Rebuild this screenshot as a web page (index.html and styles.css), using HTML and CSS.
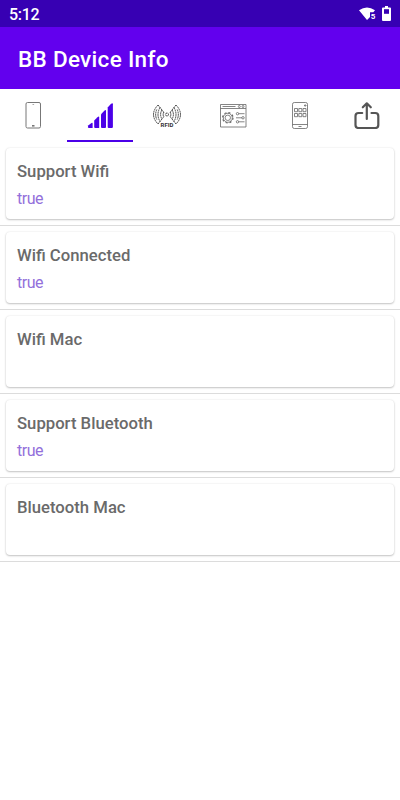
FILE: index.html
```html
<!DOCTYPE html>
<html lang="en">
<head>
    <meta charset="UTF-8">
    <meta name="viewport" content="width=device-width, initial-scale=1.0">
    <title>BB Device Info</title>
    <link rel="stylesheet" href="styles.css">
</head>
<body>
    <div class="status-bar">
        <span class="time">5:12</span>
        <div class="status-icons">
            <svg width="18" height="14" viewBox="0 0 18 14">
                <path d="M0 3.2Q8 -2.4 16 3.2L14.3 5.200H11V10L8 13Z" fill="#fff"/>
                <text x="11.700" y="12.300" class="wifi-label">5</text>
            </svg>
            <svg width="9" height="15" viewBox="0 0 9 15">
                <path d="M3 0h3v1.500h2q1 0 1 1v11.500q0 1-1 1H1q-1 0-1-1V2.500q0-1 1-1h2z" fill="#fff"/>
                <path d="M2 3.200h5v4.600H2z" fill="#3700b3"/>
            </svg>
        </div>
    </div>

    <header class="app-bar">
        <h1>BB Device Info</h1>
    </header>

    <nav class="tabs">
        <div class="tab">
            <svg width="28" height="28" viewBox="0 0 28 28" fill="none" stroke="#777">
                <rect x="7" y="1.500" width="14.500" height="25.500" rx="1.500"/>
                <path d="M13.500 3.500h1.600" stroke="#aaa"/>
                <path d="M13 24.800h2.500" stroke-width="1.600"/>
            </svg>
        </div>
        <div class="tab active">
            <svg width="28" height="28" viewBox="0 0 28 28" fill="#4b00e8">
                <path d="M2.500 24.300L5.500 22Q6.600 21.200 6.600 22.500V27H3Q1 27 2.500 24.300Z"/>
                <path d="M8.200 19.500L11.500 16.200Q13.200 14.800 13.200 16.600V27H9.200Q8.200 27 8.200 26Z"/>
                <path d="M15 13.200L18.300 9.700Q20 8.200 20 10V26Q20 27 19 27H16Q15 27 15 26Z"/>
                <path d="M21.700 6.600L24.800 3Q26.900 1.300 26.900 3.200V26Q26.900 27 25.900 27H22.700Q21.700 27 21.700 26Z"/>
            </svg>
        </div>
        <div class="tab">
            <svg width="28" height="28" viewBox="0 0 28 28" fill="none" stroke="#333" stroke-width=".9" stroke-dasharray="1.800 .5">
                <circle cx="14" cy="13.500" r="1.500"/>
                <path d="M10.800 11Q9.500 13.500 10.800 16M8.900 9Q6.300 13.500 8.900 18M7 6.500Q3 13.500 7 20.500M5 4Q-4 13.500 5 23M5 4L11 11.500M5 23L11 15.500M3.800 8.500Q1.500 13.500 3.800 18.500"/>
                <path d="M17.200 11Q18.500 13.500 17.200 16M19.100 9Q21.700 13.500 19.100 18M21 6.500Q25 13.500 21 20.500M23 4Q32 13.500 23 23M23 4L17 11.500M23 23L17 15.500M24.200 8.500Q26.500 13.500 24.200 18.500"/>
                <text x="14" y="25.500" class="rfid-label">RFID</text>
            </svg>
        </div>
        <div class="tab">
            <svg width="28" height="28" viewBox="0 0 28 28" fill="none" stroke="#666" stroke-width=".8">
                <path d="M1.500 3.500h25.500v22.500H1.500zM1.500 7.500h25.500M3.500 5.500h13"/>
                <circle cx="20.300" cy="5.500" r="1"/>
                <circle cx="24" cy="5.500" r="1"/>
                <circle cx="8.800" cy="16.800" r="4.500"/>
                <circle cx="8.800" cy="16.800" r="2.700"/>
                <circle cx="8.800" cy="16.800" r="5.200" stroke-width="1.200" stroke-dasharray="2.040 2.044"/>
                <path d="M19.500 12.700h6M17 16.800h6M19.500 20.800h6"/>
                <circle cx="18.500" cy="12.700" r="1.200"/>
                <circle cx="24" cy="16.800" r="1.200"/>
                <circle cx="18.500" cy="20.800" r="1.200"/>
            </svg>
        </div>
        <div class="tab">
            <svg width="28" height="28" viewBox="0 0 28 28" fill="none" stroke="#666" stroke-width=".8">
                <rect x="6.500" y="1.500" width="15" height="26" rx="1.800"/>
                <path d="M6.500 23.500h15M12.500 25.500h3"/>
                <path d="M18.500 4h1.500v1h-1.500z"/>
                <path d="M8.500 7.500h3v3.200h-3zM12.800 7.500h3v3.200h-3zM17 7.500h3v3.200h-3zM8.500 12.500h3v3.200h-3zM12.800 12.500h3v3.200h-3zM17 12.500h3v3.200h-3z"/>
            </svg>
        </div>
        <div class="tab">
            <svg width="28" height="28" viewBox="0 0 28 28" fill="none" stroke="#555" stroke-width="2.200" stroke-linecap="round" stroke-linejoin="round">
                <path d="M9.200 12H5.500Q2.500 12 2.500 15V24Q2.500 27 5.500 27H22.300Q25.300 27 25.300 24V15Q25.300 12 22.300 12H18.500"/>
                <path d="M13.800 18V2.800M9.800 6.300L13.800 2.300L17.800 6.300"/>
            </svg>
        </div>
    </nav>

    <main class="list">
        <div class="item">
            <div class="card">
                <h2>Support Wifi</h2>
                <p>true</p>
            </div>
        </div>
        <div class="item">
            <div class="card">
                <h2>Wifi Connected</h2>
                <p>true</p>
            </div>
        </div>
        <div class="item">
            <div class="card">
                <h2>Wifi Mac</h2>
            </div>
        </div>
        <div class="item">
            <div class="card">
                <h2>Support Bluetooth</h2>
                <p>true</p>
            </div>
        </div>
        <div class="item">
            <div class="card">
                <h2>Bluetooth Mac</h2>
            </div>
        </div>
    </main>
</body>
</html>
```
FILE: styles.css
```css
* {
    box-sizing: border-box;
}
body {
    margin: 0;
    font-family: Roboto, sans-serif;
    background-color: #fff;
}
.status-bar {
    display: flex;
    justify-content: space-between;
    align-items: center;
    height: 27px;
    padding: 0 9px;
    background-color: #3700b3;
    color: #fff;
}
.time {
    font-size: 16px;
    font-weight: 500;
    letter-spacing: -0.3px;
    line-height: 27px;
    padding-top: 1px;
}
.status-icons {
    display: flex;
    align-items: center;
    gap: 5px;
}
.wifi-label {
    font-size: 8px;
    font-weight: 700;
    fill: #fff;
}
.app-bar {
    display: flex;
    align-items: center;
    height: 62px;
    padding: 2px 18px 0;
    background-color: #6200ee;
    color: #fff;
}
.app-bar h1 {
    margin: 0;
    font-size: 22.5px;
    font-weight: 500;
    letter-spacing: 0.3px;
}
.tabs {
    display: flex;
    height: 53px;
}
.tab {
    flex: 1;
    display: flex;
    justify-content: center;
    padding-top: 12px;
    border-bottom: 2px solid transparent;
}
.tab.active {
    border-bottom-color: #4b00e8;
}
.rfid-label {
    font-size: 6px;
    font-weight: 700;
    text-anchor: middle;
    fill: #333;
    stroke: none;
}
.item {
    height: 84px;
    padding: 6px;
    border-bottom: 1px solid #dcdcdc;
}
.card {
    height: 71px;
    padding: 13px 11px;
    border-radius: 4px;
    background-color: #fff;
    box-shadow: 0 1px 2px rgba(0, 0, 0, 0.22), 0 0 2px rgba(0, 0, 0, 0.1);
}
.card h2 {
    margin: 0;
    font-size: 16.7px;
    font-weight: 500;
    line-height: 21px;
    color: #6a6a6a;
}
.card p {
    margin: 7px 0 0;
    font-size: 16px;
    letter-spacing: -0.5px;
    line-height: 20px;
    color: #9370db;
}
```
